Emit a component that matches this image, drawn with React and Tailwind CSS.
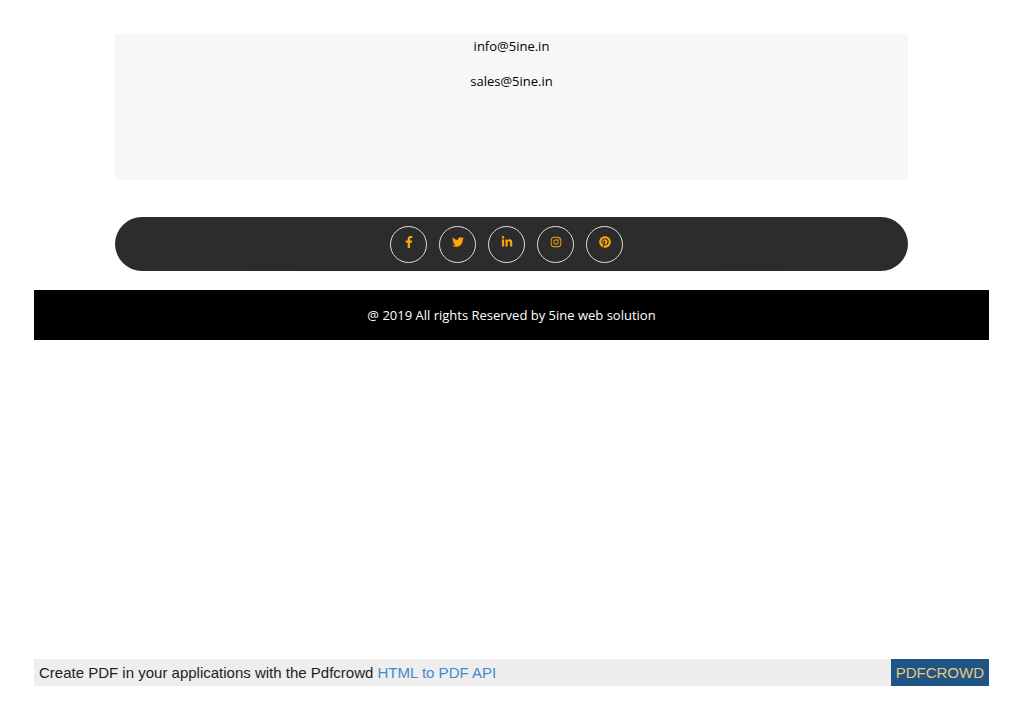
import React from "react";
import {
  FaFacebookF,
  FaTwitter,
  FaLinkedinIn,
  FaInstagram,
  FaPinterest,
} from "react-icons/fa";

const socials = [
  { name: "Facebook", Icon: FaFacebookF },
  { name: "Twitter", Icon: FaTwitter },
  { name: "LinkedIn", Icon: FaLinkedinIn },
  { name: "Instagram", Icon: FaInstagram },
  { name: "Pinterest", Icon: FaPinterest },
];

function Contact() {
  return (
    <section className="mx-[81px] h-[146px] bg-[#f7f7f7] text-center text-[13px] leading-6 text-black">
      <p className="mb-[11px]">
        <a href="mailto:info@5ine.in">info@5ine.in</a>
      </p>
      <p>
        <a href="mailto:sales@5ine.in">sales@5ine.in</a>
      </p>
    </section>
  );
}

function SocialBar() {
  return (
    <div className="mt-[37px]">
      <div className="mx-[81px] flex h-[54px] items-center justify-center gap-3 rounded-full bg-[#2c2c2c] pr-[10px]">
        {socials.map(({ name, Icon }) => (
          <a
            key={name}
            href="#"
            aria-label={name}
            className="flex h-[37px] w-[37px] items-center justify-center rounded-full border border-[#dedede] pb-[5px] text-[12px] text-[#ffa50a]"
          >
            <Icon />
          </a>
        ))}
      </div>
      <div className="h-px bg-linear-to-r from-white via-[#f7f7f7] to-white" />
    </div>
  );
}

function PdfBanner() {
  return (
    <div className="mt-auto flex items-center justify-between bg-[#eeeeee] font-['Liberation_Sans',Arial,sans-serif] text-[15px] leading-[27px] text-[#222222]">
      <p className="pl-[5px]">
        Create PDF in your applications with the Pdfcrowd{" "}
        <a href="#" className="text-[#428bca]">
          HTML to PDF API
        </a>
      </p>
      <a href="#" className="bg-[#1f5584] px-[5px] text-[#e8c97a]">
        PDFCROWD
      </a>
    </div>
  );
}

function App() {
  return (
    <div className="flex min-h-screen flex-col bg-white px-[34px] pt-[34px] pb-[38px] font-['Open_Sans',sans-serif]">
      <Contact />
      <SocialBar />
      <footer className="mt-[18px] bg-black text-center text-[13px] leading-[50px] text-white">
        <p>@ 2019 All rights Reserved by 5ine web solution</p>
      </footer>
      <PdfBanner />
    </div>
  );
}

export default App;
